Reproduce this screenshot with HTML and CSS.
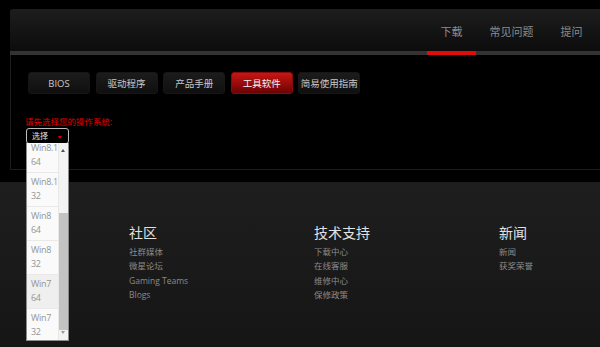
FILE: index.html
```html
<!DOCTYPE html>
<html lang="zh-CN">
<head>
<meta charset="utf-8">
<title>下载</title>
<link rel="stylesheet" href="styles.css">
</head>
<body>
<div class="page">
  <header class="topbar">
    <nav class="mainnav">
      <a class="nav-item active">下载</a>
      <a class="nav-item">常见问题</a>
      <a class="nav-item">提问</a>
    </nav>
  </header>
  <section class="content">
    <div class="tabs">
      <a class="tab">BIOS</a>
      <a class="tab">驱动程序</a>
      <a class="tab">产品手册</a>
      <a class="tab active">工具软件</a>
      <a class="tab">简易使用指南</a>
    </div>
    <p class="os-label">请先选择您的操作系统:</p>
    <div class="os-select">
      <div class="select-box"><span class="select-text">选择</span><i class="caret"></i></div>
      <div class="dropdown">
        <ul class="options">
          <li class="option"><span>Win8.1</span><span>64</span></li>
          <li class="option"><span>Win8.1</span><span>32</span></li>
          <li class="option"><span>Win8</span><span>64</span></li>
          <li class="option"><span>Win8</span><span>32</span></li>
          <li class="option hover"><span>Win7</span><span>64</span></li>
          <li class="option"><span>Win7</span><span>32</span></li>
        </ul>
        <div class="scrollbar">
          <i class="arrow-up"></i>
          <div class="thumb"></div>
          <i class="arrow-down"></i>
        </div>
      </div>
    </div>
  </section>
</div>
<footer class="footer">
  <div class="footer-col">
    <h3 class="footer-title">社区</h3>
    <a class="footer-link">社群媒体</a>
    <a class="footer-link">微星论坛</a>
    <a class="footer-link">Gaming Teams</a>
    <a class="footer-link">Blogs</a>
  </div>
  <div class="footer-col">
    <h3 class="footer-title">技术支持</h3>
    <a class="footer-link">下载中心</a>
    <a class="footer-link">在线客服</a>
    <a class="footer-link">维修中心</a>
    <a class="footer-link">保修政策</a>
  </div>
  <div class="footer-col last">
    <h3 class="footer-title">新闻</h3>
    <a class="footer-link">新闻</a>
    <a class="footer-link">获奖荣誉</a>
  </div>
</footer>
</body>
</html>
```

FILE: styles.css
```css
* { box-sizing: border-box; }
html, body {
  margin: 0;
  padding: 0;
  background: #000;
  font-family: "Open Sans", "Noto Sans CJK SC", sans-serif;
  overflow: hidden;
}
.page {
  padding: 9px 0 0 10px;
}
.topbar {
  display: flex;
  justify-content: flex-end;
  height: 46px;
  padding-right: 4px;
  background: linear-gradient(#1d1d1d, #0c0c0c);
  border-bottom: 4px solid #333;
  border-top-left-radius: 3px;
}
.mainnav {
  display: flex;
}
.nav-item {
  height: 46px;
  margin-bottom: -4px;
  padding: 16px 13.5px 0;
  font-size: 11px;
  line-height: 14px;
  color: #8c8c8c;
  border-bottom: 4px solid transparent;
}
.nav-item.active {
  border-bottom-color: #e00b0b;
}
.content {
  position: relative;
  height: 115px;
  padding: 17px 0 0 17px;
  border-left: 1px solid #1c1c1c;
  border-bottom: 1px solid #1c1c1c;
}
.tabs {
  display: flex;
  gap: 5.6px;
}
.tab {
  width: 62px;
  height: 22px;
  display: flex;
  align-items: center;
  justify-content: center;
  font-size: 9.5px;
  color: #c8c8c8;
  background: linear-gradient(#1c1c1c, #0f0f0f);
  border: 1px solid #161616;
  border-radius: 3px;
}
.tab.active {
  color: #f2f2f2;
  background: linear-gradient(#c81515, #6c0303);
  border-color: #8a0a0a;
}
.os-label {
  margin: 22px 0 0 -3px;
  font-size: 8.5px;
  line-height: 12px;
  color: #e00000;
}
.os-select {
  position: relative;
  width: 43px;
  margin-left: -2px;
}
.select-box {
  display: flex;
  align-items: center;
  justify-content: space-between;
  height: 16px;
  padding: 0 6px 0 5px;
  border: 1px solid #bdbdbd;
  border-radius: 3px;
  background: #000;
}
.select-text {
  font-size: 8px;
  line-height: 10px;
  color: #e0e0e0;
}
.caret {
  width: 0;
  height: 0;
  margin-top: 2px;
  border-left: 2.5px solid transparent;
  border-right: 2.5px solid transparent;
  border-top: 3px solid #e00000;
}
.dropdown {
  position: absolute;
  top: 15px;
  left: 0;
  z-index: 5;
  width: 43px;
  height: 198px;
  overflow: hidden;
  background: #fafafa;
  border: 1px solid #8c8c8c;
  border-top: none;
}
.options {
  list-style: none;
  margin: -4px 0 0;
  padding: 0;
}
.option {
  display: flex;
  flex-direction: column;
  height: 34px;
  padding: 2px 0 0 4px;
  font-size: 9px;
  line-height: 14px;
  letter-spacing: -0.3px;
  color: #959595;
  border-bottom: 1px solid #e9e9e9;
}
.option.hover {
  background: #efefef;
}
.scrollbar {
  position: absolute;
  top: 0;
  right: 0;
  bottom: 0;
  width: 10px;
  background: #f3f3f3;
  border-left: 1px solid #e8e8e8;
}
.arrow-up {
  position: absolute;
  top: 6px;
  left: 2px;
  width: 0;
  height: 0;
  border-left: 2.5px solid transparent;
  border-right: 2.5px solid transparent;
  border-bottom: 3px solid #505050;
}
.thumb {
  position: absolute;
  top: 70px;
  left: 0;
  width: 9px;
  height: 117px;
  background: #c3c3c3;
}
.arrow-down {
  position: absolute;
  bottom: 6px;
  left: 2px;
  width: 0;
  height: 0;
  border-left: 2.5px solid transparent;
  border-right: 2.5px solid transparent;
  border-top: 3px solid #9a9a9a;
}
.footer {
  display: flex;
  margin-top: 12px;
  min-height: 180px;
  padding: 42px 0 0 129px;
  background: linear-gradient(#1e1e1e, #151515);
}
.footer-col {
  display: flex;
  flex-direction: column;
  flex: 0 0 185px;
  width: 185px;
}
.footer-col.last {
  flex: 1 1 auto;
  width: auto;
}
.footer-title {
  margin: 0 0 3px;
  font-size: 14px;
  line-height: 18px;
  font-weight: normal;
  color: #e2e2e2;
}
.footer-link {
  font-size: 8.5px;
  line-height: 14.4px;
  color: #8a8a8a;
}
```
